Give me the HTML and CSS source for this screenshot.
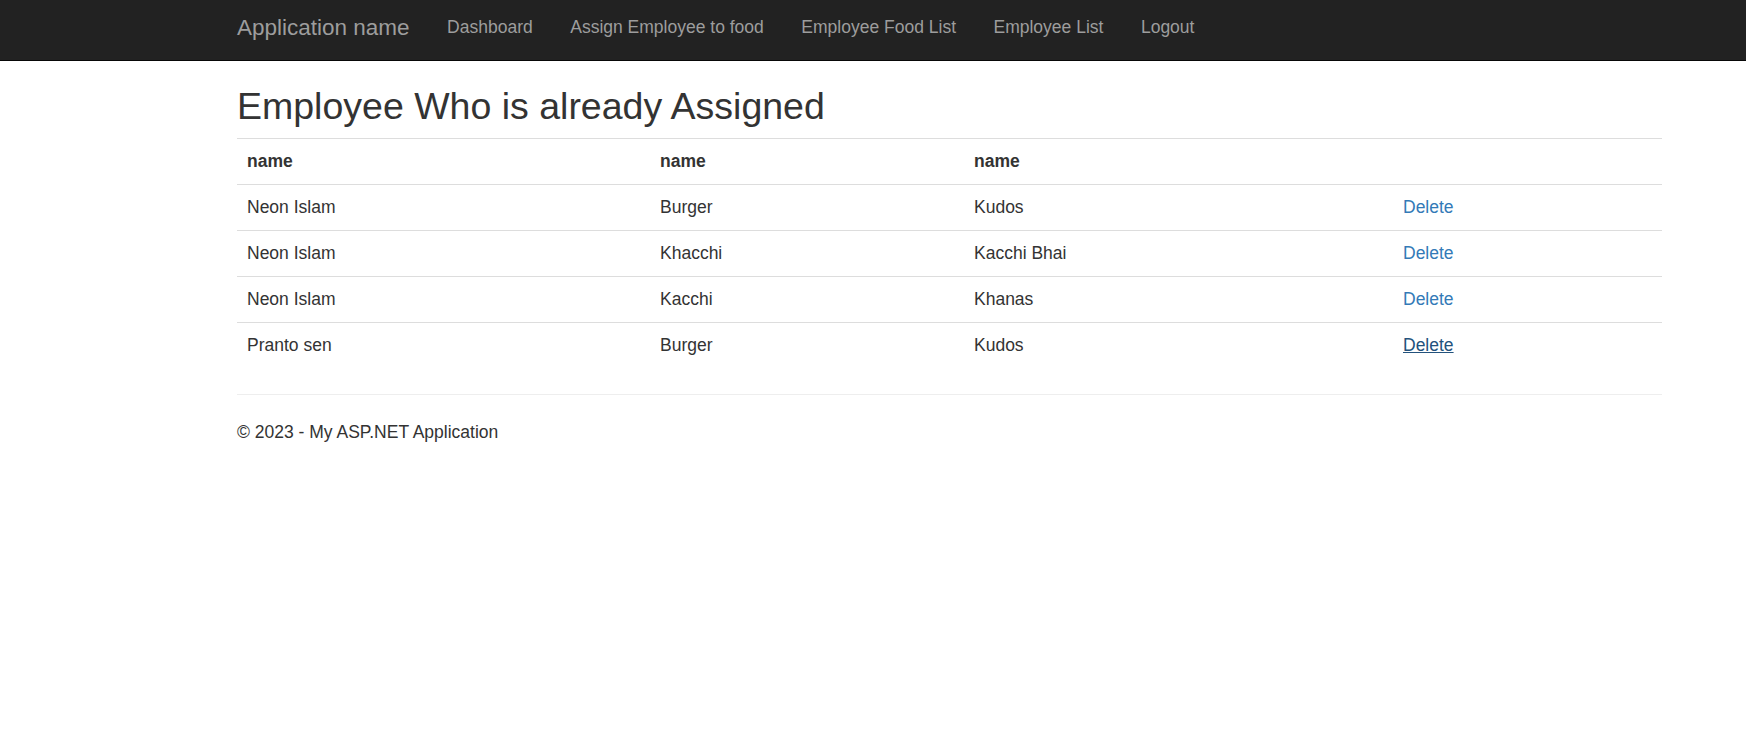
FILE: index.html
```html
<!DOCTYPE html>
<html>
<head>
<meta charset="utf-8">
<title>Employee Who is already Assigned</title>
<link rel="stylesheet" href="styles.css">
</head>
<body>
<nav class="navbar">
  <div class="container nav-inner">
    <a class="brand" href="#">Application name</a>
    <ul class="nav">
      <li><a href="#">Dashboard</a></li>
      <li><a href="#">Assign Employee to food</a></li>
      <li><a href="#">Employee Food List</a></li>
      <li><a href="#">Employee List</a></li>
      <li><a href="#">Logout</a></li>
    </ul>
  </div>
</nav>
<main class="container body-content">
  <h2 class="title">Employee Who is already Assigned</h2>
  <table class="table">
    <colgroup>
      <col class="c1"><col class="c2"><col class="c3"><col class="c4">
    </colgroup>
    <tr><th>name</th><th>name</th><th>name</th><th></th></tr>
    <tr><td>Neon Islam</td><td>Burger</td><td>Kudos</td><td><a class="link" href="#">Delete</a></td></tr>
    <tr><td>Neon Islam</td><td>Khacchi</td><td>Kacchi Bhai</td><td><a class="link" href="#">Delete</a></td></tr>
    <tr><td>Neon Islam</td><td>Kacchi</td><td>Khanas</td><td><a class="link" href="#">Delete</a></td></tr>
    <tr><td>Pranto sen</td><td>Burger</td><td>Kudos</td><td><a class="link hover" href="#">Delete</a></td></tr>
  </table>
  <hr class="rule">
  <footer class="footer">
    <p>&copy; 2023 - My ASP.NET Application</p>
  </footer>
</main>
</body>
</html>
```
FILE: styles.css
```css
* { box-sizing: border-box; }
html, body { margin: 0; padding: 0; }
body {
  font-family: "Liberation Sans", Arial, Helvetica, sans-serif;
  font-size: 17.5px;
  line-height: 25px;
  color: #333;
  background: #fff;
}
.container {
  width: 1425px;
  margin-left: 237px;
}
.navbar {
  background: #222;
  border-bottom: 1px solid #080808;
  height: 61px;
}
.nav-inner {
  display: flex;
  align-items: flex-start;
}
.brand {
  font-size: 22.5px;
  line-height: 25px;
  padding: 15px 18.75px 0 0;
  color: #9d9d9d;
  text-decoration: none;
}
.nav {
  display: flex;
  list-style: none;
  margin: 0;
  padding: 0;
}
.nav a {
  display: block;
  padding: 15px 18.75px 0;
  line-height: 25px;
  color: #9d9d9d;
  text-decoration: none;
}
.title {
  font-size: 37.5px;
  font-weight: 500;
  line-height: 41.25px;
  margin: 25px 0 11px;
}
.table {
  width: 1425px;
  table-layout: fixed;
  border-collapse: collapse;
  border-spacing: 0;
  margin-bottom: 25px;
}
.c1 { width: 413px; }
.c2 { width: 314px; }
.c3 { width: 429px; }
.c4 { width: 269px; }
.table th, .table td {
  text-align: left;
  padding: 10px;
  line-height: 25px;
  height: 46px;
  border-top: 1px solid #ddd;
  vertical-align: top;
}
.table th { font-weight: 700; }
.link {
  color: #337ab7;
  text-decoration: none;
}
.link.hover {
  color: #23527c;
  text-decoration: underline;
}
.rule {
  border: 0;
  border-top: 1px solid #eee;
  margin: 25px 0;
}
.footer p {
  margin: 0 0 12.5px;
}
```
